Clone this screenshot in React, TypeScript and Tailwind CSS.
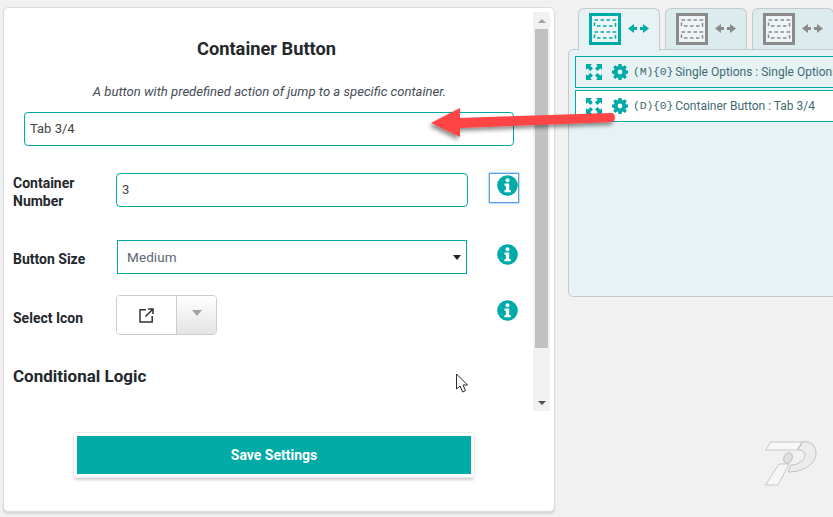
import React from "react";

const teal = "#00aaa7";

function Info({ className = "" }: { className?: string }) {
  return (
    <svg viewBox="0 0 22 22" className={`w-[21px] h-[21px] ${className}`}>
      <circle cx="11" cy="11" r="10.800" fill={teal} />
      <circle cx="11" cy="5.600" r="2.100" fill="#fff" />
      <path d="M7.800 9h5v6.700h1.600v2.300H7.800v-2.300h1.500v-4.400H7.800z" fill="#fff" />
    </svg>
  );
}

function TabIcon({ color }: { color: string }) {
  return (
    <svg width="61" height="32" viewBox="0 0 61 32" fill="none">
      <rect x="1.500" y="1.500" width="29" height="29" stroke={color} strokeWidth="3" fill="#edf5f6" />
      <rect x="5.500" y="7" width="21" height="6" stroke={color} strokeWidth="1.500" strokeDasharray="3.500 2.500" />
      <rect x="5.500" y="19" width="21" height="6" stroke={color} strokeWidth="1.500" strokeDasharray="3.500 2.500" />
      <path d="M39 15.500l6-4.500v3h3v3h-3v3zM60 15.500l-6-4.500v3h-3v3h3v3z" fill={color} />
    </svg>
  );
}

function Expand() {
  return (
    <svg width="16" height="16" viewBox="0 0 16 16" fill={teal}>
      <path d="M0 0h6L4.300 1.700 7 4.400 4.400 7 1.700 4.300 0 6z" />
      <path d="M16 0h-6l1.700 1.700L9 4.400 11.600 7l2.700-2.700L16 6z" />
      <path d="M0 16h6l-1.700-1.700L7 11.600 4.400 9l-2.700 2.700L0 10z" />
      <path d="M16 16h-6l1.700-1.700L9 11.600 11.600 9l2.700 2.700L16 10z" />
    </svg>
  );
}

function Gear() {
  return (
    <svg width="16" height="16" viewBox="0 0 16 16">
      <path
        fill={teal}
        fillRule="evenodd"
        d="M6.500 0h3l.4 2.100 1.100.5L12.800 1.300l2 2-1.300 1.800.5 1.100 2 .4v3l-2 .4-.5 1.100 1.300 1.800-2 2-1.800-1.300-1.100.5-.4 2H6.500l-.4-2-1.100-.5-1.800 1.300-2-2 1.300-1.800-.5-1.100-2-.4v-3l2-.4.5-1.100-1.300-1.800 2-2 1.800 1.300 1.100-.5zM8 5.600a2.400 2.400 0 1 0 0 4.800 2.400 2.400 0 0 0 0-4.800z"
      />
    </svg>
  );
}

function Row({ label, prefix, tint }: { label: string; prefix: string; tint: boolean }) {
  return (
    <div className={`h-[32px] border border-[#00aaa7] flex items-center pl-[10px] whitespace-nowrap overflow-hidden text-[12px] text-[#3e6a72] ${tint ? "bg-[#e6f2f4]" : "bg-white"}`}>
      <Expand />
      <span className="w-[10px] shrink-0" />
      <Gear />
      <span className="ml-[5px] font-['Liberation_Mono',monospace] text-[11.500px] tracking-[-0.2px]">{prefix}</span>
      <span className="ml-[2px]">{label}</span>
    </div>
  );
}

function Tab({ active }: { active: boolean }) {
  return (
    <div className={`w-[82px] shrink-0 rounded-t-[6px] border border-b-0 border-[#c4c9ca] flex items-start pt-[4px] pl-[10px] ${active ? "bg-[#e6f2f4] relative z-10 h-[43px]" : "bg-[#dcebee] h-[42px]"}`}>
      <TabIcon color={active ? teal : "#8b8b8b"} />
    </div>
  );
}

function FieldRow({ label, children, info, className = "", labelClass = "pt-[4px]" }: { label: React.ReactNode; children: React.ReactNode; info: React.ReactNode; className?: string; labelClass?: string }) {
  return (
    <div className={`flex items-center ${className}`}>
      <div className={`w-[115px] pl-[9px] text-[14px] font-bold leading-[18px] text-[#23282d] ${labelClass}`}>{label}</div>
      {children}
      {info}
    </div>
  );
}

export default function App() {
  return (
    <div className="relative w-[833px] h-[517px] overflow-hidden bg-[#f1f1f1] flex font-['Roboto',sans-serif]">
      <div className="ml-[3px] mt-[7px] w-[552px] h-[505px] shrink-0 bg-white border border-[#dcdcdc] rounded-[5px] shadow-[0_2px_2px_rgba(0,0,0,0.12)] flex flex-col">
        <div className="flex h-[399px] mt-[4px] shrink-0">
          <div className="flex-1 min-w-0 flex flex-col overflow-hidden">
            <h2 className="mt-[25px] text-center text-[18.250px] leading-[24px] font-bold text-[#23282d] pr-[4px]">Container Button</h2>
            <p className="mt-[22px] text-center text-[13.100px] leading-[18px] italic text-[#444c55] pl-[2px]">
              A button with predefined action of jump to a specific container.
            </p>
            <div className="mt-[11px] ml-[20px] w-[490px] h-[34px] border border-[#00aaa7] rounded-[4px] flex items-center pl-[5px] text-[13px] text-[#444]">Tab 3/4</div>
            <FieldRow
              className="mt-[26px] h-[36px]"
              labelClass="pt-[4px]"
              label={<>Container<br />Number</>}
              info={
                <div className="ml-[21px] w-[30px] h-[30px] border border-[#5b9dd9] shadow-[0_0_2px_rgba(30,140,190,0.8)] flex items-start justify-end pt-[1px] -mt-[4px]">
                  <Info />
                </div>
              }
            >
              <div className="-ml-[3px] w-[352px] h-[34px] border border-[#00aaa7] rounded-[4px] flex items-center pl-[5px] text-[13px] text-[#444]">3</div>
            </FieldRow>
            <FieldRow
              className="mt-[31px] h-[36px]"
              label="Button Size"
              info={<div className="ml-[30px] -mt-[6px]"><Info /></div>}
            >
              <div className="-ml-[2px] w-[350px] h-[34px] border border-[#00aaa7] flex items-center justify-between pl-[9px] pr-[5px] text-[13.500px] text-[#5a6570]">
                <span className="tracking-[0.1px] pt-[1px]">Medium</span>
                <svg width="8" height="5" viewBox="0 0 8 5"><path d="M0 0h8L4 5z" fill="#222" /></svg>
              </div>
            </FieldRow>
            <FieldRow
              className="mt-[20px] h-[40px]"
              labelClass="pt-[6px]"
              label="Select Icon"
              info={<div className="ml-[280px] -mt-[9px]"><Info /></div>}
            >
              <div className="-ml-[3px] w-[101px] h-[40px] border border-[#ccc] rounded-[4px] flex overflow-hidden">
                <div className="w-[60px] flex items-center justify-center border-r border-[#ccc] bg-white">
                  <svg width="15" height="15" viewBox="0 0 15 15" fill="none" stroke="#333" strokeWidth="1.500">
                    <path d="M7 1.800H1v12.200h12.200V8" />
                    <path d="M9 1h5v5M14 1L6.500 8.500" />
                  </svg>
                </div>
                <div className="flex-1 flex items-center justify-center bg-gradient-to-b from-white to-[#e4e4e4] pb-[4px]">
                  <svg width="10" height="6" viewBox="0 0 10 6"><path d="M0 0h10L5 6z" fill="#a4a4a4" /></svg>
                </div>
              </div>
            </FieldRow>
            <h3 className="mt-[29px] ml-[9px] text-[17px] leading-[24px] font-bold text-[#23282d]">Conditional Logic</h3>
          </div>
          <div className="w-[17px] mr-[4px] shrink-0 bg-[#f1f1f1] flex flex-col">
            <div className="h-[17px] flex items-center justify-center">
              <svg width="8" height="4" viewBox="0 0 8 4"><path d="M0 4h8L4 0z" fill="#a0a0a0" /></svg>
            </div>
            <div className="mx-[2px] h-[319px] bg-[#c1c1c1]" />
            <div className="flex-1" />
            <div className="h-[17px] flex items-center justify-center">
              <svg width="8" height="4" viewBox="0 0 8 4"><path d="M0 0h8L4 4z" fill="#505050" /></svg>
            </div>
          </div>
        </div>
        <div className="mt-[21px] ml-[69px] w-[402px] h-[46px] p-[3px] bg-white border border-[#eaeaea] rounded-[3px] shadow-[0_3px_3px_-1px_rgba(0,0,0,0.18)]">
          <div className="h-full bg-[#00aaa7] flex items-center justify-center text-white text-[14px] font-bold">Save Settings</div>
        </div>
      </div>

      <div className="ml-[13px] mt-[8px] flex-1 min-w-0 flex flex-col">
        <div className="flex gap-[5px] pl-[10px] w-[300px] items-start h-[41px]">
          <Tab active />
          <Tab active={false} />
          <Tab active={false} />
        </div>
        <div className="w-[300px] h-[248px] shrink-0 bg-[#e6f2f4] border border-[#c4c9ca] rounded-[5px] pl-[6px] pt-[6px] flex flex-col gap-[2px]">
          <Row prefix="(M){0}" label="Single Options : Single Options" tint />
          <Row prefix="(D){0}" label="Container Button : Tab 3/4" tint={false} />
        </div>
        <div className="ml-[197px] mt-[144px]">
          <svg width="52" height="46" viewBox="0 0 52 46" className="block">
            <path d="M0.500 9 L6 1 H37 L32 9z" fill="#f8f8f8" stroke="#bcbcbc" strokeWidth="0.800" />
            <path d="M38 0.500 C47 0.500 51 6 51 12 C51 22 40 31 23 31 L26 24 C32 24 40 20 40 14 C40 11 38 9 33 9z" fill="#ececec" stroke="#b4b4b4" strokeWidth="0.800" />
            <path d="M0.500 44 L14 23 H24 L13 44z" fill="#f6f6f6" stroke="#bcbcbc" strokeWidth="0.800" />
            <ellipse cx="23" cy="17" rx="4" ry="5.500" fill="#e0e0e0" stroke="#b4b4b4" strokeWidth="0.800" transform="rotate(25 23 17)" />
          </svg>
        </div>
      </div>

      {/* annotation arrow */}
      <svg className="absolute left-[425px] top-[100px] pointer-events-none" width="200" height="50" viewBox="0 0 200 50">
        <defs>
          <filter id="s" x="-10%" y="-30%" width="120%" height="180%">
            <feDropShadow dx="-2" dy="3" stdDeviation="2" floodColor="#000" floodOpacity="0.45" />
          </filter>
        </defs>
        <path d="M6 23 L35 8 L35 18 L188 13 Q192 17 188 22 L35 28 L35 37 Z" fill="#ff4444" filter="url(#s)" />
      </svg>

      {/* mouse pointer */}
      <svg className="absolute left-[455px] top-[373px] pointer-events-none" width="14" height="21" viewBox="0 0 14 21">
        <path d="M1.500 1v15l3.500-3 2.500 6 3-1.300-2.500-5.700h4.500z" fill="#fff" stroke="#2a2a33" strokeWidth="1" />
      </svg>
    </div>
  );
}
